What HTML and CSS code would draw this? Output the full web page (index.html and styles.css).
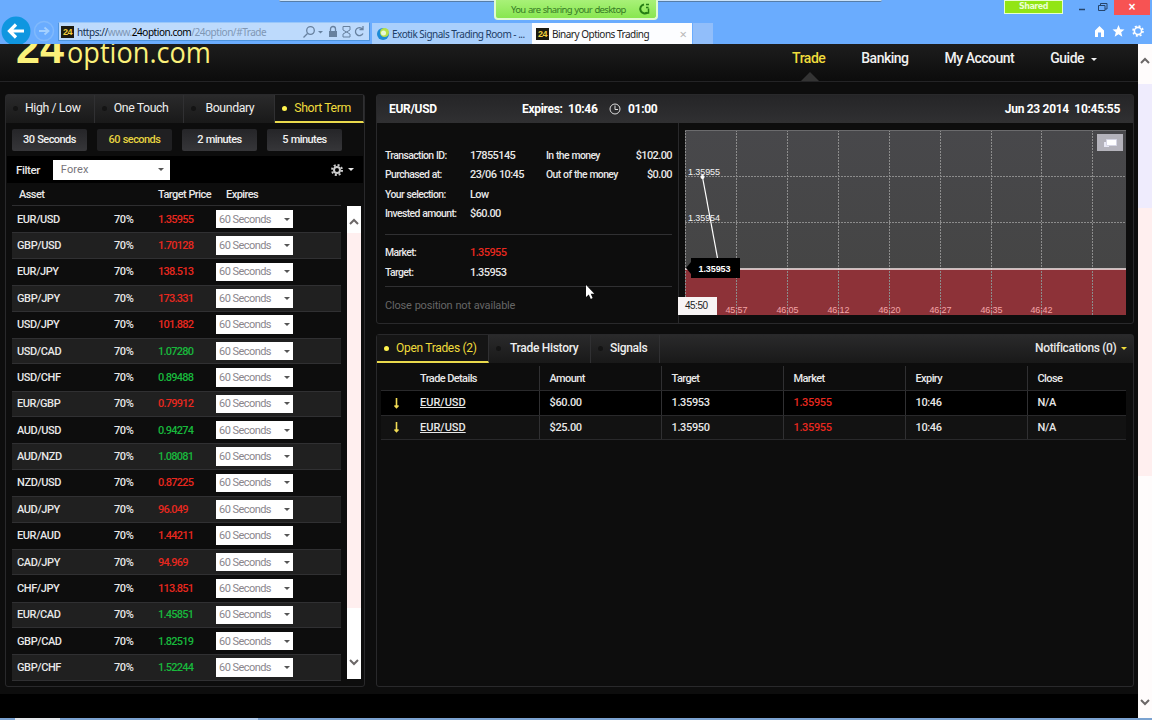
FILE: index.html
```html
<!DOCTYPE html>
<html lang="en">

<head>
    <meta charset="UTF-8">
    <meta name="viewport" content="width=device-width, initial-scale=1.0">

    <title>Binary Options Trading</title>
    <link rel="stylesheet" href="styles.css">
</head>

<body>

    <div class="browser-bar">
        <div class="window-edge"></div>
        <svg class="nav-icons" width="58" height="44" viewBox="0 0 58 44">
            <circle cx="16" cy="31" r="14.5" fill="#0f96e0" />
            <path d="M24 31H10M16 24.5L9.500 31L16 37.500" fill="none" stroke="#fff" stroke-width="3.200" />
            <circle cx="44" cy="31" r="9.500" fill="none" stroke="#80b9fc" stroke-width="1.500" />
            <path d="M39 31H48M44.500 27.500L48.500 31L44.500 34.500" fill="none" stroke="#a4d0ff" stroke-width="1.800" />
        </svg>
        <div class="address">
            <span class="favicon">24</span>
            <span class="url">https://<span class="url-dim">www.</span><b>24option.com</b><span class="url-dim">/24option/#Trade</span></span>
            <svg width="68" height="16" viewBox="0 0 68 16" fill="none" stroke="#67819f" stroke-width="1.300">
                <circle cx="9.500" cy="6.500" r="3.800" />
                <path d="M6.500 9.500L2.500 13.500" />
                <path d="M17 7h5l-2.500 2.500z" fill="#67819f" stroke="none" />
                <path d="M29.500 7V5a2.500 2.500 0 0 1 5 0V7" />
                <rect x="28" y="7" width="8" height="6" fill="#67819f" stroke="none" />
                <path d="M42 6V2.500H49V6L45.500 8ZM42 13V10L45.500 8L49 10V13Z" stroke-width="1" />
                <path d="M61.500 5A4 4 0 1 0 62 9.500M62 2V5.500H58.500" />
            </svg>
        </div>
        <div class="browser-tab">
            <svg class="tab-icon" width="14" height="14" viewBox="0 0 14 14">
                <circle cx="7" cy="7" r="6" fill="#1c8bd6" />
                <circle cx="8.500" cy="5.500" r="4.500" fill="#b6e04a" />
                <circle cx="7.500" cy="6" r="2.500" fill="#e8f8d8" />
            </svg>
            <span class="tab-title">Exotik Signals Trading Room - ...</span>
        </div>
        <div class="browser-tab active">
            <span class="favicon">24</span>
            <span class="tab-title second">Binary Options Trading</span>
            <span class="tab-close">×</span>
        </div>
        <div class="new-tab"></div>
        <div class="window-tools">
            <div class="window-buttons">
                <span class="shared">Shared</span>
                <svg width="36" height="14" viewBox="0 0 36 14" fill="none" stroke="#26456c">
                    <path d="M5 9.500H11" stroke-width="1.500" />
                    <path d="M24.500 5.500H31V10.500H24.500ZM26.500 5V3.500H33V9H31" />
                </svg>
                <span class="close-window">×</span>
            </div>
            <svg class="tool-icons" width="54" height="16" viewBox="0 0 54 16">
                <path d="M3 14V7.500L7.500 3L12 7.500V14H9V9.500H6V14Z" fill="#fff" />
                <path d="M26.500 2L28.200 6.200L32.500 6.500L29.200 9.300L30.300 13.700L26.500 11.300L22.700 13.700L23.800 9.300L20.500 6.500L24.800 6.200Z" fill="#fff" />
                <circle cx="46" cy="8" r="3.600" fill="none" stroke="#fff" stroke-width="1.600" />
                <circle cx="46" cy="8" r="5" fill="none" stroke="#fff" stroke-width="1.600" stroke-dasharray="2 1.930" />
            </svg>
        </div>
        <div class="share-banner">
            <span>You are sharing your desktop</span>
            <svg width="14" height="14" viewBox="0 0 14 14" fill="none" stroke="#257c14" stroke-width="2">
                <path d="M7 2.500A4.500 4.500 0 1 0 10.500 10.500" />
                <path d="M9 2.500h3M9 5.500h2.500M11.500 6.500V11H8" stroke-width="1.500" />
            </svg>
        </div>
    </div>

    <div class="viewport">
        <div class="page">
            <div class="header">
                <svg class="logo" width="200" height="26" viewBox="0 0 200 26" fill="#fbf17a">
                    <text class="logo-number" x="0" y="19" textLength="48" lengthAdjust="spacingAndGlyphs">24</text>
                    <text class="logo-name" x="51" y="18.500" textLength="144" lengthAdjust="spacingAndGlyphs">option.com</text>
                </svg>
                <ul class="menu">
                    <li class="selected">Trade</li>
                    <li>Banking</li>
                    <li>My Account</li>
                    <li>Guide <i class="caret"></i></li>
                </ul>
            </div>

            <div class="content">
                <div class="panel assets">
                    <div class="tabs">
                        <span class="tab">High / Low</span>
                        <span class="tab">One Touch</span>
                        <span class="tab">Boundary</span>
                        <span class="tab selected">Short Term</span>
                    </div>
                    <div class="durations">
                        <span class="duration">30 Seconds</span>
                        <span class="duration selected">60 seconds</span>
                        <span class="duration">2 minutes</span>
                        <span class="duration">5 minutes</span>
                    </div>
                    <div class="filter">
                        <span>Filter</span>
                        <div class="select filter-select">Forex <i class="caret"></i></div>
                        <svg class="gear" width="14" height="14" viewBox="0 0 14 14" fill="none" stroke="#ccc">
                            <circle cx="7" cy="7" r="3" stroke-width="2" />
                            <circle cx="7" cy="7" r="5" stroke-width="2" stroke-dasharray="2 1.927" />
                        </svg>
                        <i class="caret"></i>
                    </div>
                    <div class="asset-head">
                        <span>Asset</span>
                        <span></span>
                        <span>Target Price</span>
                        <span>Expires</span>
                    </div>
                    <div class="asset-body">
                        <div class="asset-list" id="assetList"></div>
                        <div class="list-scroll">
                            <svg width="14" height="22" viewBox="0 0 14 22"><path d="M3 14L7 10L11 14" /></svg>
                            <svg width="14" height="22" viewBox="0 0 14 22"><path d="M3 3L7 7L11 3" /></svg>
                        </div>
                    </div>
                </div>

                <div class="main">
                    <div class="panel position">
                        <div class="position-head">
                            <span class="pair">EUR/USD</span>
                            <span class="expires">Expires: &nbsp;10:46</span>
                            <svg width="12" height="12" viewBox="0 0 12 12" fill="none" stroke="#ddd">
                                <circle cx="6" cy="6" r="5" />
                                <path d="M6 2.500V6.500H9" />
                            </svg>
                            <span class="remaining">01:00</span>
                            <span class="clock">Jun 23 2014 &nbsp;10:45:55</span>
                        </div>
                        <div class="position-body">
                            <div class="details">
                                <div class="detail-grid">
                                    <span>Transaction ID:</span><b>17855145</b><span>In the money</span><b class="amount">$102.00</b>
                                    <span>Purchased at:</span><b>23/06 10:45</b><span>Out of the money</span><b class="amount">$0.00</b>
                                    <span>Your selection:</span><b>Low</b><span></span><b></b>
                                    <span>Invested amount:</span><b>$60.00</b><span></span><b></b>
                                </div>
                                <div class="detail-grid market">
                                    <span>Market:</span><b class="down">1.35955</b><span></span><b></b>
                                    <span>Target:</span><b>1.35953</b><span></span><b></b>
                                </div>
                                <div class="no-close">Close position not available</div>
                            </div>
                            <svg class="chart" width="448" height="186" viewBox="0 0 448 186">
                                <defs>
                                    <linearGradient id="plot" x1="0" y1="0" x2="0" y2="1">
                                        <stop offset="0" stop-color="#48484b" />
                                        <stop offset="1" stop-color="#454545" />
                                    </linearGradient>
                                </defs>
                                <rect x="7" y="0" width="441" height="139" fill="url(#plot)" />
                                <rect x="7" y="139" width="441" height="46" fill="#8d3238" />
                                <g id="chartGrid"></g>
                                <path d="M7 .5H448" stroke="#6b6b6d" />
                                <path d="M7 139H448" stroke="#f5e9e9" stroke-width="1.500" />
                                <g class="price-labels">
                                    <text x="10" y="45" textLength="32">1.35955</text>
                                    <text x="10" y="91" textLength="32">1.35954</text>
                                </g>
                                <path d="M24.500 47L39.500 128" stroke="#fff" stroke-width="1.200" />
                                <circle cx="24.500" cy="47" r="2" fill="#fff" />
                                <path d="M8 138L13 132V128H62V148H13V144Z" fill="#000" />
                                <text class="price-tag" x="20.500" y="142" textLength="32">1.35953</text>
                                <rect x="0" y="167" width="39" height="18" fill="#f8f4f4" />
                                <text class="time-tag" x="7" y="179" textLength="23">45:50</text>
                                <rect x="419" y="4" width="26" height="17" fill="#b4b3bb" />
                                <path d="M426 12H431V17H426Z" fill="#e8e8f4" />
                                <path d="M428.500 9.500H438.500V15.500H428.500Z" fill="#fff" stroke="#d6d6e4" />
                            </svg>
                        </div>
                    </div>

                    <div class="panel trades">
                        <div class="tabs">
                            <span class="tab selected">Open Trades (2)</span>
                            <span class="tab">Trade History</span>
                            <span class="tab">Signals</span>
                            <span class="notifications">Notifications (0) <i class="caret"></i></span>
                        </div>
                        <table class="trade-table">
                            <thead>
                                <tr>
                                    <th class="arrow-cell"></th>
                                    <th class="name-cell">Trade Details</th>
                                    <th>Amount</th>
                                    <th>Target</th>
                                    <th>Market</th>
                                    <th>Expiry</th>
                                    <th class="last-cell">Close</th>
                                </tr>
                            </thead>
                            <tbody>
                                <tr class="current">
                                    <td class="arrow-cell"><svg width="7" height="12" viewBox="0 0 7 12"><path d="M3.500 1V10M1.500 8.500L3.500 10.500L5.500 8.500" /></svg></td>
                                    <td class="name-cell"><u>EUR/USD</u></td>
                                    <td>$60.00</td>
                                    <td>1.35953</td>
                                    <td class="down">1.35955</td>
                                    <td>10:46</td>
                                    <td>N/A</td>
                                </tr>
                                <tr>
                                    <td class="arrow-cell"><svg width="7" height="12" viewBox="0 0 7 12"><path d="M3.500 1V10M1.500 8.500L3.500 10.500L5.500 8.500" /></svg></td>
                                    <td class="name-cell"><u>EUR/USD</u></td>
                                    <td>$25.00</td>
                                    <td>1.35950</td>
                                    <td class="down">1.35955</td>
                                    <td>10:46</td>
                                    <td>N/A</td>
                                </tr>
                            </tbody>
                        </table>
                    </div>
                </div>
            </div>
            <div class="footer"></div>
        </div>
        <div class="page-scroll">
            <svg width="14" height="40" viewBox="0 0 14 40"><path d="M3 19L7 15L11 19" /></svg>
            <div class="thumb"></div>
            <svg class="scroll-end" width="14" height="32" viewBox="0 0 14 32"><path d="M3 14L7 18L11 14" /></svg>
        </div>
    </div>
    <div class="taskbar"></div>

    <svg class="cursor" width="10" height="16" viewBox="0 0 10 16">
        <path d="M1 1V13L3.800 10.500L5.800 15L7.600 14L5.700 9.800H9.300Z" fill="#fff" />
    </svg>

    <script src="script.js"></script>
</body>

</html>
```

FILE: styles.css
```css
* {
    box-sizing: border-box;
}

body {
    margin: 0;
    width: 1152px;
    height: 720px;
    overflow: hidden;
    background-color: #000;
    color: #e8e8e8;
    font-family: Roboto, sans-serif;
    font-size: 12px;
    font-weight: 500;
    position: relative;
}

svg {
    display: block;
    flex-shrink: 0;
}

/* browser window */
.browser-bar {
    height: 44px;
    background-color: #6aacfe;
    display: flex;
    align-items: flex-end;
    position: relative;
}

.window-edge {
    position: absolute;
    left: 279px;
    top: 0;
    width: 603px;
    height: 2px;
    background-color: #c9e1f8;
    border-bottom: 1px solid #557da8;
    border-radius: 0 0 4px 4px;
}

.address {
    width: 312px;
    height: 19px;
    margin-bottom: 3px;
    padding-left: 2px;
    background-color: #bddafc;
    border: 1px solid #4f94dc;
    border-top-color: #98c7fb;
    display: flex;
    align-items: center;
    color: #16304f;
    font-family: "Noto Sans", sans-serif;
    font-size: 10px;
    font-weight: 400;
}

.favicon {
    width: 13px;
    height: 12px;
    flex-shrink: 0;
    background-color: #1c1a10;
    color: #f2cf3c;
    font: bold 9px/12px "Liberation Sans", sans-serif;
    text-align: center;
    letter-spacing: -0.5px;
}

.url {
    width: 224px;
    margin-left: 3px;
    letter-spacing: -0.46px;
    white-space: nowrap;
}

.url b {
    font-weight: 400;
    color: #000;
}

.url-dim {
    color: #7f97b4;
}

.browser-tab {
    width: 160px;
    height: 21px;
    margin-left: 2px;
    padding: 0 3px 0 4px;
    background-color: #a9cffc;
    display: flex;
    align-items: center;
    color: #1c3d66;
    font-family: "Noto Sans", sans-serif;
    font-size: 10px;
    font-weight: 400;
}

.browser-tab.active {
    margin-left: 0;
    background-color: #fcfdff;
    color: #222;
}

.tab-title {
    margin-left: 2px;
    letter-spacing: -0.5px;
    white-space: nowrap;
}

.tab-title.second {
    margin-left: 3px;
}

.tab-close {
    margin-left: auto;
    margin-right: 2px;
    color: #b8b8b8;
    font-size: 13px;
}

.new-tab {
    width: 20px;
    height: 21px;
    margin-left: 1px;
    background-color: #91befa;
}

.window-tools {
    width: 148px;
    height: 44px;
    margin-left: auto;
}

.window-buttons {
    display: flex;
    align-items: flex-start;
}

.shared {
    width: 59px;
    height: 14px;
    margin-right: 11px;
    border: 1px solid #e6ffd0;
    background-color: #92e514;
    color: #eaffd2;
    font: bold 8px/12px "DejaVu Sans", sans-serif;
    letter-spacing: -0.5px;
    text-align: center;
}

.close-window {
    width: 36px;
    height: 15px;
    margin-left: 4px;
    background-color: #f75353;
    color: #fff;
    font: bold 12px/14px "Liberation Sans", sans-serif;
    text-align: center;
}

.tool-icons {
    margin: 8px 0 0 88px;
}

.share-banner {
    position: absolute;
    left: 494px;
    top: 0;
    width: 164px;
    height: 20px;
    padding: 0 5px 0 15px;
    border: 2px solid #e0fbd0;
    border-top: 0;
    border-radius: 0 0 4px 4px;
    background: linear-gradient(#a8f178, #88e650);
    display: flex;
    align-items: center;
    justify-content: space-between;
    color: #357a25;
    font-family: "Noto Sans", sans-serif;
    font-size: 9.5px;
    font-weight: 400;
    letter-spacing: -0.65px;
    word-spacing: 0.5px;
    white-space: nowrap;
}

.viewport {
    height: 674px;
    display: flex;
}

.taskbar {
    height: 2px;
    background: linear-gradient(90deg, #7ba2d0 0 15px, #e4e8ee 15px 60px, #7ba2d0 60px 160px, #b5cfee 160px 258px, #7ba2d0 258px);
}

.page-scroll {
    width: 14px;
    background-color: #fffcfc;
    display: flex;
    flex-direction: column;
}

.thumb {
    height: 392px;
    background: linear-gradient(#efecfd 0 124px, #ffefef 124px);
}

.scroll-end {
    margin-top: auto;
}

.page-scroll path,
.list-scroll path {
    fill: none;
    stroke: #6b6767;
    stroke-width: 2;
}

/* page */
.page {
    width: 1138px;
    background-color: #0d0d0d;
}

.header {
    height: 38px;
    padding: 0 41px 0 16px;
    border-bottom: 1px solid #242426;
    background: linear-gradient(#1d1d1d, #0c0c0c);
    display: flex;
    justify-content: space-between;
}

.logo-number {
    font: bold 44px "Liberation Sans", sans-serif;
}

.logo-name {
    font: 400 29px "Open Sans", sans-serif;
}

.menu {
    list-style: none;
    margin: 0;
    padding: 0;
    display: flex;
    gap: 36px;
    color: #f1f1f1;
    font-size: 14px;
    letter-spacing: -0.5px;
    line-height: 29px;
}

.menu li {
    position: relative;
}

.menu .selected,
.tab.selected {
    color: #f0dc3c;
}

.menu .selected::after {
    content: "";
    position: absolute;
    left: 9px;
    bottom: 0;
    border: 9px solid transparent;
    border-top: 0;
    border-bottom-color: #343434;
}

.caret {
    display: inline-block;
    margin-left: 4px;
    border: 3px solid transparent;
    border-top-color: currentColor;
    border-bottom: 0;
    vertical-align: middle;
}

.content {
    height: 612px;
    padding: 12px 4px 0 5px;
    display: flex;
    gap: 11px;
}

.footer {
    height: 24px;
    background-color: #000;
}

.panel {
    border: 1px solid #29292b;
    border-radius: 3px;
}

.tabs {
    height: 28px;
    background: linear-gradient(#2a2a2b, #191919);
    display: flex;
}

.tab {
    padding-left: 18px;
    border-right: 1px solid #303032;
    color: #eee;
    line-height: 27px;
    position: relative;
    white-space: nowrap;
}

.tab::before {
    content: "";
    position: absolute;
    left: 7px;
    top: 11px;
    width: 5px;
    height: 5px;
    border-radius: 50%;
    background-color: #141414;
}

.tab.selected {
    background-color: #151515;
    border-bottom: 2px solid #e9d94c;
}

.tab.selected::before {
    background-color: #fff34e;
}

/* assets */
.assets {
    width: 360px;
    height: 593px;
}

.assets .tab {
    flex: 1;
    padding-left: 19px;
    font-size: 12.3px;
    font-weight: 400;
    letter-spacing: -0.4px;
}

.assets .tab:nth-child(3) {
    padding-left: 22px;
}

.durations {
    padding: 6px 0 5px 6px;
    display: flex;
    gap: 10px;
}

.duration {
    width: 75px;
    height: 22px;
    border-radius: 2px;
    background: linear-gradient(#252528, #363639);
    color: #f1f1f1;
    font-size: 11px;
    letter-spacing: -0.55px;
    word-spacing: 0.5px;
    line-height: 22px;
    text-align: center;
}

.duration.selected {
    background: #202022;
    color: #e6d340;
}

.filter {
    height: 27px;
    margin: 0 1px;
    padding: 0 9px 0 9px;
    background-color: #000;
    display: flex;
    align-items: center;
    font-size: 11.5px;
    letter-spacing: -0.4px;
}

.select {
    background-color: #fff;
    color: #77747a;
    display: flex;
    align-items: center;
    justify-content: space-between;
    font-weight: 400;
}

.select .caret {
    color: #555;
}

.filter-select {
    width: 117px;
    height: 20px;
    margin-left: 13px;
    padding: 0 6px 0 8px;
    font-size: 11px;
    letter-spacing: 0.1px;
}

.gear {
    margin-left: auto;
}

.asset-head {
    height: 22px;
    padding-left: 13px;
    display: grid;
    grid-template-columns: 97px 42px 68px 1fr;
    align-items: center;
    font-size: 11px;
    letter-spacing: -0.55px;
    white-space: nowrap;
}

.asset-body {
    height: 475px;
    padding: 0 3px 0 6px;
    display: flex;
    justify-content: space-between;
}

.asset-list {
    width: 329px;
    border-top: 1px solid #2e2e30;
}

.asset {
    height: 26.390px;
    padding-left: 5px;
    display: grid;
    grid-template-columns: 97px 44px 58px 77px;
    align-items: center;
    font-size: 11px;
    letter-spacing: -0.4px;
}

.asset .up,
.asset .down {
    letter-spacing: -0.75px;
}

.asset:nth-child(even) {
    background-color: #202020;
    border-top: 1px solid #303032;
    border-bottom: 1px solid #303032;
}

.asset .select {
    height: 18.500px;
    padding: 0 3px;
    color: #8a868c;
    font-size: 11px;
    letter-spacing: -0.55px;
}

.up {
    color: #18b83c;
}

.down {
    color: #e8281f;
}

.list-scroll {
    width: 14px;
    height: 473px;
    margin-top: 1px;
    background: linear-gradient(#fff 0 27px, #ffefef 27px 402px, #fff 402px);
    display: flex;
    flex-direction: column;
    justify-content: space-between;
}

.list-scroll svg:first-child {
    margin-top: 4px;
}

/* open position */
.main {
    width: 758px;
    display: flex;
    flex-direction: column;
    gap: 10px;
}

.position {
    height: 230px;
}

.position-head {
    height: 28px;
    padding: 0 13px 0 12px;
    background: linear-gradient(#252527, #303032);
    display: flex;
    align-items: center;
    color: #fff;
    font-size: 12px;
    font-weight: 700;
    letter-spacing: -0.3px;
}

.pair {
    width: 133px;
}

.expires {
    width: 87px;
}

.remaining {
    margin-left: 7px;
}

.clock {
    margin-left: auto;
}

.position-body {
    height: 200px;
    display: flex;
}

.details {
    width: 302px;
    padding: 23px 6px 0 8px;
    border-right: 1px solid #29292b;
    font-size: 10.4px;
    letter-spacing: -0.6px;
    word-spacing: 0.5px;
}

.detail-grid {
    display: grid;
    grid-template-columns: 85px 76px 83px 1fr;
    grid-auto-rows: 19.300px;
    align-items: center;
    padding-bottom: 11px;
    border-bottom: 1px solid #303032;
    white-space: nowrap;
}

.detail-grid b {
    font-size: 11px;
    font-weight: 500;
}

.amount {
    text-align: right;
}

.detail-grid.market {
    padding: 8px 0 4px;
}

.no-close {
    margin-top: 12px;
    color: #666;
    font-size: 11px;
    font-weight: 400;
    letter-spacing: -0.2px;
}

.chart {
    margin: 7px 0 0 -1px;
    font-family: "Liberation Sans", sans-serif;
    font-size: 9px;
    font-weight: 400;
}

.grid-line {
    stroke: #8c8c8c;
    stroke-dasharray: 2 1;
}

.price-labels {
    fill: #f4f4f4;
}

.time-label {
    fill: #f3a5a7;
}

.price-tag {
    fill: #fff;
    font-weight: 700;
}

.time-tag {
    fill: #222;
    font-size: 10px;
}

/* trades */
.trades {
    height: 353px;
}

.trades .tab {
    width: 102px;
    padding-left: 19px;
    font-size: 12px;
    letter-spacing: -0.3px;
}

.trades .tab:nth-child(1) {
    width: 112px;
    font-weight: 400;
}

.trades .tab:nth-child(2) {
    padding-left: 21px;
}

.trades .tab:nth-child(3) {
    width: 69px;
}

.notifications {
    margin-left: auto;
    padding-right: 6px;
    letter-spacing: -0.35px;
    line-height: 27px;
}

.notifications .caret {
    margin-left: 2px;
    color: #f0dc3c;
}

.trade-table {
    width: 745px;
    margin: 3px 0 0 4px;
    border-collapse: collapse;
    table-layout: fixed;
    font-size: 11px;
    letter-spacing: -0.35px;
}

.trade-table th,
.trade-table td {
    width: 122px;
    height: 24.500px;
    padding: 0 0 0 10px;
    border-bottom: 1px solid #29292b;
    border-left: 1px solid #303032;
    font-weight: 500;
    text-align: left;
}

.trade-table th {
    letter-spacing: -0.6px;
}

.trade-table .arrow-cell {
    width: 29px;
    padding-left: 12px;
    border-left: 0;
}

.trade-table .name-cell {
    width: 129px;
    border-left: 0;
}

.trade-table td.name-cell {
    letter-spacing: 0;
}

.trade-table .last-cell {
    width: 99px;
}

.trade-table td {
    background-color: #121212;
}

.trade-table .current td {
    background-color: #000;
}

.trade-table path {
    fill: none;
    stroke: #f2dc55;
    stroke-width: 1.600;
}

.cursor {
    position: absolute;
    left: 585px;
    top: 284px;
}
```

FILE: script.js
```js
const assets = [
    ['EUR/USD', '1.35955', 'down'],
    ['GBP/USD', '1.70128', 'down'],
    ['EUR/JPY', '138.513', 'down'],
    ['GBP/JPY', '173.331', 'down'],
    ['USD/JPY', '101.882', 'down'],
    ['USD/CAD', '1.07280', 'up'],
    ['USD/CHF', '0.89488', 'up'],
    ['EUR/GBP', '0.79912', 'down'],
    ['AUD/USD', '0.94274', 'up'],
    ['AUD/NZD', '1.08081', 'up'],
    ['NZD/USD', '0.87225', 'down'],
    ['AUD/JPY', '96.049', 'down'],
    ['EUR/AUD', '1.44211', 'down'],
    ['CAD/JPY', '94.969', 'down'],
    ['CHF/JPY', '113.851', 'down'],
    ['EUR/CAD', '1.45851', 'up'],
    ['GBP/CAD', '1.82519', 'up'],
    ['GBP/CHF', '1.52244', 'up']
];

document.getElementById('assetList').innerHTML = assets.map(([name, price, trend]) => `
    <div class="asset">
        <span>${name}</span>
        <span>70%</span>
        <span class="${trend}">${price}</span>
        <div class="select">60 Seconds <i class="caret"></i></div>
    </div>
`).join('');

// one vertical line every 51px, the last one has no label
const times = ['45:57', '46:05', '46:12', '46:20', '46:27', '46:35', '46:42', ''];
let grid = '<path class="grid-line" d="M7.5 0V185M7 46.5H448M7 92.5H448" />';
times.forEach((time, i) => {
    const x = 58.5 + Math.round(i * 50.9);
    grid += `<path class="grid-line" d="M${x} 0V185" />`;
    if (time) {
        grid += `<text class="time-label" x="${x - 11}" y="183" textLength="22">${time}</text>`;
    }
});
document.getElementById('chartGrid').innerHTML = grid;
```
